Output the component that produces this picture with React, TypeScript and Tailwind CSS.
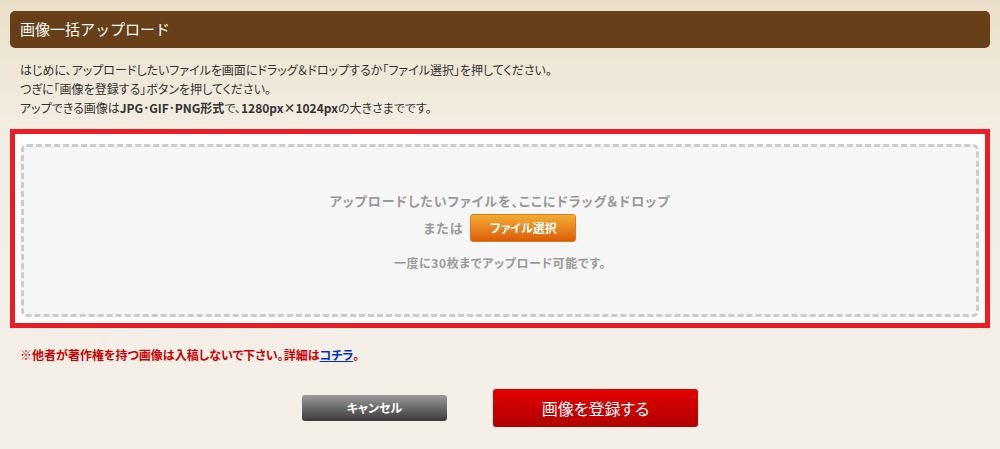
import React from "react";

const jp = "font-['Noto_Sans_CJK_JP','Noto_Sans',sans-serif] [font-feature-settings:'palt']";

export default function App() {
  return (
    <div
      className={`min-h-[449px] w-full bg-gradient-to-b from-[#e9dfc9] via-[#f3eee4] via-[30%] to-[#f4f0e8] px-[10px] pt-[11px] ${jp}`}
    >
      <UploadHeader title="画像一括アップロード" />

      <div className="mt-[12px] pl-[10px] text-[12px] leading-[19px] text-[#333]">
        <p>
          はじめに、アップロードしたいファイルを画面にドラッグ＆ドロップするか「ファイル選択」を押してください。
        </p>
        <p>つぎに「画像を登録する」ボタンを押してください。</p>
        <p>
          アップできる画像は<b>JPG･GIF･PNG形式</b>で、<b>1280px×1024px</b>
          の大きさまでです。
        </p>
      </div>

      <DropArea />

      <p className="mt-[17px] pl-[10px] text-[12px] font-bold leading-[19px] text-[#cc0000]">
        ※他者が著作権を持つ画像は入稿しないで下さい。詳細は
        <a href="#" className="text-[#0033cc] underline">
          コチラ
        </a>
        。
      </p>

      <div className="mt-[25px] flex items-center justify-center gap-[46px]">
        <button className="h-[26px] w-[145px] rounded-[3px] bg-gradient-to-b from-[#9c9c9c] to-[#3c3c3c] text-[12px] font-bold text-white">
          キャンセル
        </button>
        <button className="h-[38px] w-[205px] rounded-[3px] bg-gradient-to-b from-[#e40000] to-[#b00000] text-[16px] text-white">
          画像を登録する
        </button>
      </div>
    </div>
  );
}

function UploadHeader({ title }: { title: string }) {
  return (
    <div className="flex h-[37px] items-center rounded-[5px] bg-[#673f19] pl-[10px] text-[15px] text-white [font-feature-settings:normal]">
      {title}
    </div>
  );
}

function DropArea() {
  return (
    <div className="mt-[12px] border-[5px] border-[#ed1c24] bg-white px-[6px] pt-[10px] pb-[6px]">
      <div className="flex h-[173px] flex-col items-center justify-center rounded-[6px] border-[3px] border-dashed border-[#cccccc] bg-[#f6f6f6] pt-[2px]">
        <p className="text-[13px] font-bold leading-[18px] tracking-[1px] text-[#999]">
          アップロードしたいファイルを、ここにドラッグ＆ドロップ
        </p>
        <div className="mt-[4px] flex items-center gap-[7px]">
          <span className="text-[13px] font-bold tracking-[1px] text-[#999]">または</span>
          <button className="h-[28px] w-[106px] rounded-[3px] border border-[#dc7a1c] bg-gradient-to-b from-[#f2ac32] to-[#dc5c06] text-[12px] font-bold text-white">
            ファイル選択
          </button>
        </div>
        <p className="mt-[12px] text-[12px] font-bold leading-[18px] tracking-[0.6px] text-[#999]">
          一度に30枚までアップロード可能です。
        </p>
      </div>
    </div>
  );
}
